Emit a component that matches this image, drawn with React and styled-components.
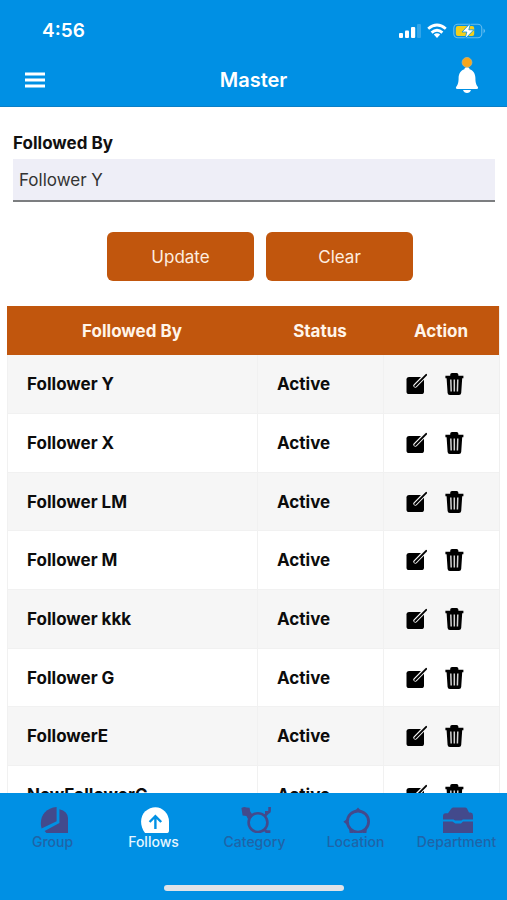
import { useState } from 'react';
import styled, { createGlobalStyle } from 'styled-components';

const followers = [
    { id: 1, name: 'Follower Y', status: 'Active' },
    { id: 2, name: 'Follower X', status: 'Active' },
    { id: 3, name: 'Follower LM', status: 'Active' },
    { id: 4, name: 'Follower M', status: 'Active' },
    { id: 5, name: 'Follower kkk', status: 'Active' },
    { id: 6, name: 'Follower G', status: 'Active' },
    { id: 7, name: 'FollowerE', status: 'Active' },
    { id: 8, name: 'NewFollowerG', status: 'Active' },
];

const EditIcon = () => (
    <svg width="21" height="22" viewBox="0 0 21 22" aria-hidden="true">
        <rect x="0.5" y="4" width="17.5" height="17" rx="2.6" fill="#000" />
        <path d="M19.4 2.4 L9.4 12.6" fill="none" stroke="#f6f6f6" strokeWidth="4.2" strokeLinecap="round" />
        <path d="M20.2 1.8 L9.2 13" stroke="#000" strokeWidth="1.8" strokeLinecap="round" />
    </svg>
);

const TrashIcon = () => (
    <svg width="19" height="22" viewBox="0 0 19 22" aria-hidden="true">
        <path d="M0.4 2.8 H5.2 V1.8 Q5.2 0 7 0 H11.6 Q13.4 0 13.4 1.8 V2.8 H18.4 V5.2 H17.2 L16.2 20 Q16 22 14 22 H4.8 Q2.8 22 2.6 20 L1.6 5.2 H0.4 Z" fill="#000" />
        <path d="M5.8 6.6 L6.2 18.6 M9.3 6.6 V18.6 M12.8 6.6 L12.4 18.6" stroke="#d4d4d4" strokeWidth="1.5" />
    </svg>
);

const BellIcon = () => (
    <svg width="24" height="38" viewBox="0 0 24 38" aria-hidden="true">
        <path d="M12 10 C13.5 10 14.4 11 14.6 12.2 C18.4 13.4 20.4 17 20.4 21 C20.4 26 21.4 28 22.6 29.6 Q24 32 21.6 32 H2.4 Q0 32 1.4 29.6 C2.6 28 3.6 26 3.6 21 C3.6 17 5.6 13.4 9.4 12.2 C9.6 11 10.5 10 12 10 Z" fill="#fff" />
        <path d="M8 33 H16 Q15 36 12 36 Q9 36 8 33 Z" fill="#fff" />
        <circle cx="12" cy="5.4" r="4.9" fill="#f7a61c" stroke="#c9b27a" strokeWidth="0.8" />
    </svg>
);

const MenuIcon = () => (
    <svg width="20" height="16" viewBox="0 0 20 16" aria-hidden="true">
        <path d="M0 2 H20 M0 8 H20 M0 14 H20" stroke="#fff" strokeWidth="3" />
    </svg>
);

const SignalIcon = () => (
    <svg width="22" height="16" viewBox="0 0 22 16" aria-hidden="true">
        <g fill="#fff">
            <rect x="0" y="10" width="4" height="5" rx="1" />
            <rect x="6" y="7.4" width="4" height="7.6" rx="1" />
            <rect x="12" y="4" width="4.2" height="11" rx="1" />
            <rect x="18" y="1" width="4" height="14" rx="1" opacity="0.2" />
        </g>
    </svg>
);

const WifiIcon = () => (
    <svg width="20" height="16" viewBox="0 0 20 16" aria-hidden="true">
        <g fill="none" stroke="#fff" strokeWidth="2.8">
            <path d="M1.2 5.8 Q10 -1.8 18.8 5.8" />
            <path d="M4.6 9.6 Q10 4.8 15.4 9.6" />
        </g>
        <path d="M6.8 11.6 Q10 9 13.2 11.6 L10 15 Z" fill="#fff" />
    </svg>
);

const BatteryIcon = () => (
    <svg width="34" height="18" viewBox="0 0 34 18" aria-hidden="true">
        <rect x="0.8" y="2.2" width="28" height="13.6" rx="4" fill="none" stroke="#fff" strokeOpacity="0.4" strokeWidth="1.1" />
        <path d="M30.6 6.6 Q33.2 9 30.6 11.4 Z" fill="#fff" fillOpacity="0.5" />
        <rect x="2.8" y="4" width="18.4" height="10" rx="2" fill="#f2cf1c" />
        <path d="M17.6 1 L9 10 H13.8 L12 17 L20.8 7.8 H15.8 Z" fill="#fff" stroke="#0090e4" strokeWidth="0.8" />
    </svg>
);

const GroupIcon = () => (
    <svg width="28" height="26" viewBox="0 0 28 26" aria-hidden="true">
        <path d="M16.6 0 V14.2 L1.6 21.6 C-1.4 10.6 4.6 1 16.6 0 Z" fill="currentColor" />
        <path d="M19.4 2.2 Q27.8 4.4 28 11 V26 H6.4 L4.6 24 L19.4 16 Z" fill="currentColor" />
    </svg>
);

const FollowsIcon = () => (
    <svg width="28" height="26" viewBox="0 0 28 26" aria-hidden="true">
        <path d="M4 26 C-2 18 -0.4 9 4 4.6 C10.6 -1.2 18.6 -1.2 24 4.6 Q28 9 28 14.6 V23.4 Q28 26 25.4 26 Z" fill="#fff" />
        <path d="M14.4 22 V9.6 M8.6 15 L14.4 9.2 L20.2 15" fill="none" stroke="#0090e4" strokeWidth="2.4" />
    </svg>
);

const CategoryIcon = () => (
    <svg width="30" height="26" viewBox="0 0 30 26" aria-hidden="true">
        <g fill="none" stroke="currentColor" strokeWidth="2.6">
            <circle cx="17" cy="15.6" r="9.4" />
            <path d="M23.4 9.4 L27 5.6 M28.6 0 V3.4 Q28.6 5.4 26.4 5.4 H24 M23 22 L25.4 24.6 H29.4" />
            <path d="M7 6 L11 9.8" />
        </g>
        <path d="M0.4 1 Q3.6 -0.6 5.4 0.6 L8.6 0.8 L9.2 4.4 L11.4 7.4 L7 12 L5.4 9 L1.6 8.4 Z" fill="currentColor" />
    </svg>
);

const LocationIcon = () => (
    <svg width="28" height="26" viewBox="0 0 28 26" aria-hidden="true">
        <circle cx="15" cy="14.6" r="10.6" fill="none" stroke="currentColor" strokeWidth="2.8" />
        <path d="M12 4 L15 0.6 L18 4 Z M4.6 11.4 L0.4 14.8 L4.6 18.2 Z M6 21 L11 26 H6.6 Z M24 21 L19 26 H23.4 Z" fill="currentColor" />
    </svg>
);

const DepartmentIcon = () => (
    <svg width="30" height="26" viewBox="0 0 30 26" aria-hidden="true">
        <path d="M0 12.4 V9 Q0 6.4 2.6 6.2 H5 L8.4 1.6 Q9.2 0.6 10.4 0.6 H22 Q23.4 0.6 24 1.6 L26 5.6 H27.6 Q30 5.8 30 8.4 V12.4 H19.8 L18.4 13.6 H12 L10.6 12.4 Z" fill="currentColor" />
        <path d="M0 14.6 H9.4 L12.4 16.6 H18 L20 14.6 H30 V26 H0 Z" fill="currentColor" />
    </svg>
);

const tabs = [
    { label: 'Group', Icon: GroupIcon },
    { label: 'Follows', Icon: FollowsIcon },
    { label: 'Category', Icon: CategoryIcon },
    { label: 'Location', Icon: LocationIcon },
    { label: 'Department', Icon: DepartmentIcon },
];

const FollowerRow = ({ follower, onEdit, onDelete }) => (
    <Row>
        <Cell>{follower.name}</Cell>
        <Cell>{follower.status}</Cell>
        <Cell>
            <Actions>
                <IconButton type="button" aria-label={`Edit ${follower.name}`} onClick={() => onEdit(follower)}>
                    <EditIcon />
                </IconButton>
                <IconButton type="button" aria-label={`Delete ${follower.name}`} onClick={() => onDelete(follower)}>
                    <TrashIcon />
                </IconButton>
            </Actions>
        </Cell>
    </Row>
);

const App = () => {
    const [list, setList] = useState(followers);
    const [selectedId, setSelectedId] = useState(1);
    const [name, setName] = useState('Follower Y');
    const [activeTab, setActiveTab] = useState('Follows');

    const handleEdit = (follower) => {
        setSelectedId(follower.id);
        setName(follower.name);
    };

    const handleDelete = (follower) => {
        setList(list.filter((item) => item.id !== follower.id));
    };

    const handleClear = () => {
        setSelectedId(null);
        setName('');
    };

    const handleSubmit = (e) => {
        e.preventDefault();
        setList(list.map((item) => (item.id === selectedId ? { ...item, name } : item)));
    };

    return (
        <Screen>
            <GlobalStyle />
            <Header>
                <StatusBar>
                    <Time>4:56</Time>
                    <StatusIcons>
                        <SignalIcon />
                        <WifiIcon />
                        <BatteryIcon />
                    </StatusIcons>
                </StatusBar>
                <TitleBar>
                    <IconButton type="button" aria-label="Menu"><MenuIcon /></IconButton>
                    <Title>Master</Title>
                    <IconButton type="button" aria-label="Notifications"><BellIcon /></IconButton>
                </TitleBar>
            </Header>
            <Main>
                <Form onSubmit={handleSubmit}>
                    <Label htmlFor="followedBy">Followed By</Label>
                    <Input id="followedBy" value={name} onChange={(e) => setName(e.target.value)} />
                    <Buttons>
                        <Button type="submit">Update</Button>
                        <Button type="button" onClick={handleClear}>Clear</Button>
                    </Buttons>
                </Form>
                <Table>
                    <thead>
                        <tr>
                            <HeadCell>Followed By</HeadCell>
                            <HeadCell $width="126px">Status</HeadCell>
                            <HeadCell $width="116px">Action</HeadCell>
                        </tr>
                    </thead>
                    <tbody>
                        {list.map((follower) => (
                            <FollowerRow key={follower.id} follower={follower} onEdit={handleEdit} onDelete={handleDelete} />
                        ))}
                    </tbody>
                </Table>
            </Main>
            <Footer>
                <TabBar>
                    {tabs.map(({ label, Icon }) => (
                        <Tab key={label} type="button" $active={label === activeTab} onClick={() => setActiveTab(label)}>
                            <Icon />
                            <TabLabel $active={label === activeTab}>{label}</TabLabel>
                        </Tab>
                    ))}
                </TabBar>
                <HomeIndicator />
            </Footer>
        </Screen>
    );
};

const GlobalStyle = createGlobalStyle`
    * {
        box-sizing: border-box;
    }
    body {
        margin: 0;
        background: #fff;
        font-family: Inter, "Liberation Sans", sans-serif;
    }
    button, input {
        font-family: inherit;
    }
    svg {
        display: block;
    }
`;

const Screen = styled.div`
    display: flex;
    flex-direction: column;
    height: 100vh;
`;

const Header = styled.header`
    flex: none;
    background: #0090e4;
    border-bottom: 1px solid #0b7fc6;
    color: #fff;
`;

const StatusBar = styled.div`
    display: flex;
    justify-content: space-between;
    align-items: center;
    height: 54px;
    padding: 7px 20px 0 42px;
`;

const Time = styled.span`
    font-size: 19px;
    font-weight: 600;
`;

const StatusIcons = styled.div`
    display: flex;
    align-items: center;
    gap: 6px;
`;

const TitleBar = styled.div`
    display: grid;
    grid-template-columns: 1fr auto 1fr;
    align-items: center;
    height: 52px;
    padding: 0 28px;

    > :first-child {
        margin-left: -3px;
    }
    > :last-child {
        justify-self: end;
        padding-bottom: 8px;
    }
`;

const Title = styled.h1`
    margin: 0;
    font-size: 20px;
    font-weight: 600;
`;

const IconButton = styled.button`
    justify-self: start;
    padding: 0;
    border: none;
    background: none;
    cursor: pointer;
`;

const Main = styled.main`
    flex: 1;
    min-height: 0;
    overflow: hidden;
    padding: 0 7px;
`;

const Form = styled.form`
    display: flex;
    flex-direction: column;
    padding: 24px 5px 25px 6px;
`;

const Label = styled.label`
    margin-bottom: 4px;
    font-size: 17px;
    font-weight: 700;
    line-height: 24px;
    color: #111;
`;

const Input = styled.input`
    width: 100%;
    height: 43px;
    padding: 0 6px;
    border: none;
    border-bottom: 2px solid #7c7e80;
    border-radius: 0;
    background: #eeeef7;
    color: #333;
    font-size: 17px;
    outline: none;
`;

const Buttons = styled.div`
    display: flex;
    justify-content: center;
    gap: 12px;
    margin-top: 30px;
    padding-left: 12px;
`;

const Button = styled.button`
    width: 147px;
    height: 49px;
    border: none;
    border-radius: 6px;
    background: #c1560d;
    color: #fdeee0;
    font-size: 17px;
    cursor: pointer;
`;

const Table = styled.table`
    width: 100%;
    table-layout: fixed;
    border-collapse: separate;
    border-spacing: 0;
    border-right: 1px solid #efefef;
`;

const HeadCell = styled.th`
    width: ${({ $width }) => $width || 'auto'};
    height: 49px;
    padding: 0;
    background: #c1560d;
    color: #fff5ea;
    font-size: 17px;
    font-weight: 700;
`;

const Row = styled.tr`
    height: 59px;

    &:nth-child(3n) {
        height: 58px;
    }
    &:nth-child(odd) {
        background: #f6f6f6;
    }
`;

const Cell = styled.td`
    padding: 0 0 0 19px;
    border-left: 1px solid #f1f1f1;
    border-bottom: 1px solid #f1f1f1;
    color: #0c0c0c;
    font-size: 17px;
    font-weight: 700;
    white-space: nowrap;
`;

const Actions = styled.div`
    display: flex;
    align-items: center;
    gap: 18px;
    padding-left: 3px;
`;

const Footer = styled.footer`
    display: flex;
    flex: none;
    flex-direction: column;
    justify-content: space-between;
    align-items: center;
    height: 107px;
    padding: 14px 0 9px;
    background: #0090e4;
`;

const TabBar = styled.nav`
    display: flex;
    width: 100%;
    padding-left: 2px;
`;

const Tab = styled.button`
    display: flex;
    flex: 1 1 0;
    flex-direction: column;
    align-items: center;
    min-width: 0;
    padding: 0;
    border: none;
    background: none;
    color: #434a8c;
    cursor: pointer;

    svg {
        margin-left: 2px;
    }
`;

const TabLabel = styled.span`
    color: ${({ $active }) => ($active ? '#e6f6ff' : '#1f64a8')};
    font-size: 14px;
    font-weight: 500;
    line-height: 17px;
`;

const HomeIndicator = styled.div`
    width: 180px;
    height: 6px;
    border-radius: 3px;
    background: #dfe3e8;
`;

export default App;
